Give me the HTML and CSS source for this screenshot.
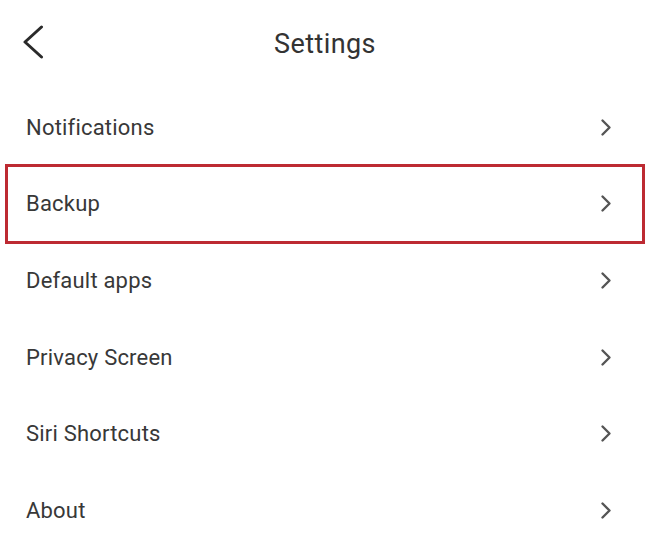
FILE: index.html
```html
<!DOCTYPE html>
<html lang="en">
<head>
  <meta charset="UTF-8" />
  <meta name="viewport" content="width=device-width, initial-scale=1.0"/>
  <title>Settings</title>
  <link rel="stylesheet" href="styles.css">
</head>
<body>
  <div class="header">
    <button class="back-btn" aria-label="Back">
      <svg width="22" height="34" viewBox="0 0 22 34">
        <path d="M19.5 2 L3 17 L19.5 32" fill="none" stroke="#2a2a2a" stroke-width="3" stroke-linecap="round" stroke-linejoin="round"/>
      </svg>
    </button>
    <h1>Settings</h1>
    <div></div>
  </div>

  <ul class="settings-list">
    <li class="settings-item">
      <span>Notifications</span>
      <svg class="chevron" width="12" height="19" viewBox="0 0 12 19"><path d="M2.5 2.5 L9.5 9.5 L2.5 16.5" /></svg>
    </li>
    <li class="settings-item selected">
      <span>Backup</span>
      <svg class="chevron" width="12" height="19" viewBox="0 0 12 19"><path d="M2.5 2.5 L9.5 9.5 L2.5 16.5" /></svg>
    </li>
    <li class="settings-item">
      <span>Default apps</span>
      <svg class="chevron" width="12" height="19" viewBox="0 0 12 19"><path d="M2.5 2.5 L9.5 9.5 L2.5 16.5" /></svg>
    </li>
    <li class="settings-item">
      <span>Privacy Screen</span>
      <svg class="chevron" width="12" height="19" viewBox="0 0 12 19"><path d="M2.5 2.5 L9.5 9.5 L2.5 16.5" /></svg>
    </li>
    <li class="settings-item">
      <span>Siri Shortcuts</span>
      <svg class="chevron" width="12" height="19" viewBox="0 0 12 19"><path d="M2.5 2.5 L9.5 9.5 L2.5 16.5" /></svg>
    </li>
    <li class="settings-item">
      <span>About</span>
      <svg class="chevron" width="12" height="19" viewBox="0 0 12 19"><path d="M2.5 2.5 L9.5 9.5 L2.5 16.5" /></svg>
    </li>
  </ul>
</body>
</html>
```

FILE: styles.css
```css
* {
  margin: 0;
  padding: 0;
  box-sizing: border-box;
}

body {
  font-family: Roboto, 'Noto Sans', Arial, sans-serif;
  background-color: #ffffff;
  color: #333;
  width: 650px;
  height: 558px;
  overflow: hidden;
}

.header {
  display: grid;
  grid-template-columns: 1fr auto 1fr;
  align-items: center;
  height: 89px;
  padding: 0 22px 2px;
}

.back-btn {
  border: none;
  background: none;
  display: flex;
  justify-content: flex-start;
  margin-top: -4px;
  cursor: pointer;
}

h1 {
  font-size: 27px;
  font-weight: 400;
  color: #333;
  letter-spacing: 0.4px;
}

.settings-list {
  list-style: none;
  padding: 0 7px;
}

.settings-item {
  display: flex;
  justify-content: space-between;
  align-items: center;
  height: 76.6px;
  padding: 0 31px 0 19px;
  font-size: 22px;
  color: #383838;
  letter-spacing: 0.2px;
}

.settings-item.selected {
  outline: 3px solid #bd2a32;
  outline-offset: -1px;
}

.chevron path {
  fill: none;
  stroke: #555;
  stroke-width: 2.4;
  stroke-linecap: round;
  stroke-linejoin: round;
}
```
